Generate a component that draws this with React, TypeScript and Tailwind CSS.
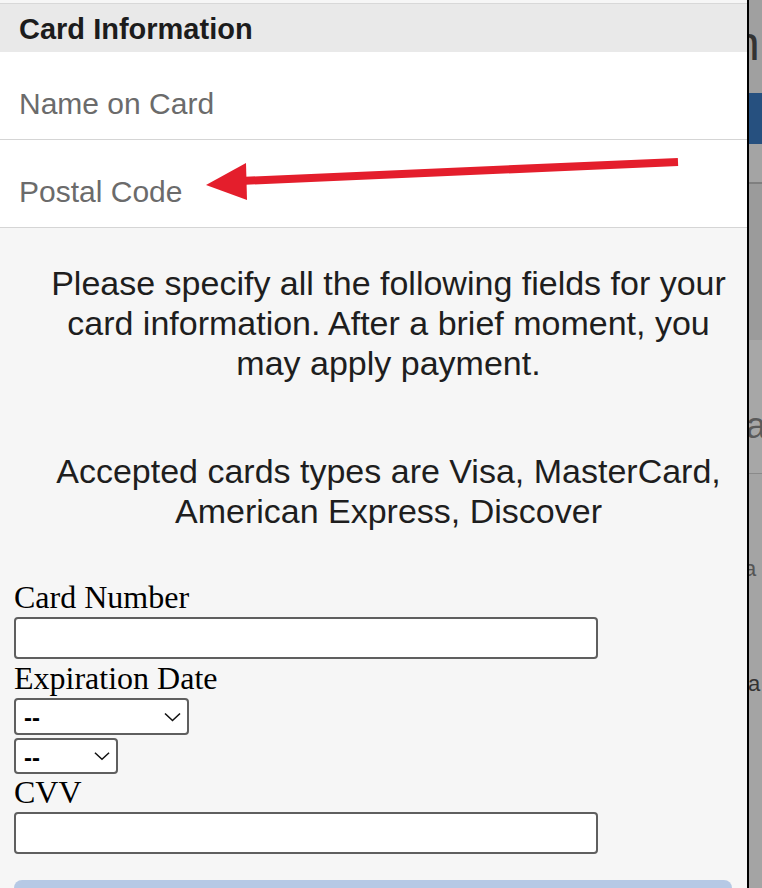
import React from "react";

const sans = { fontFamily: '"Liberation Sans", Arial, sans-serif' };
const serif = { fontFamily: '"Liberation Serif", "Times New Roman", serif' };

const Chevron: React.FC<{ w: number }> = ({ w }) => (
  <svg width={w} height={10} viewBox="0 0 17 10" fill="none" className="pointer-events-none absolute top-1/2 -translate-y-1/2" style={{ right: 8 }}>
    <path d="M1 1.5 L8.5 8.5 L16 1.5" stroke="#111" strokeWidth="1.6" />
  </svg>
);

// red annotation arrow pointing at the Postal Code row
const Arrow: React.FC = () => (
  <svg width={500} height={60} viewBox="0 0 500 60" className="pointer-events-none absolute left-[200px] top-[150px]">
    <path d="M478 12 L40 31" stroke="#e41e2c" strokeWidth="8" strokeLinecap="butt" />
    <path d="M6 35 L46 13 L47 50 Z" fill="#e41e2c" />
  </svg>
);

const App: React.FC = () => {
  return (
    <div className="flex h-[888px] w-[762px] overflow-hidden bg-[#a3a3a3]">
      <div className="relative w-[747px] shrink-0 bg-[#f6f6f6] pt-[3px]">
        <div
          style={sans}
          className="h-[49px] border-t border-[#d8d8d8] bg-[#e9e9e9] px-[19px] pt-[8px] text-[29px] font-bold leading-[34px] text-[#1c1c1c]"
        >
          Card Information
        </div>
        <div
          style={sans}
          className="h-[88px] border-b border-[#d5d5d5] bg-white px-[19px] pt-[35px] text-[30px] leading-[34px] text-[#6b6b6b]"
        >
          Name on Card
        </div>
        <div
          style={sans}
          className="h-[88px] border-b border-[#d5d5d5] bg-white px-[19px] pt-[35px] text-[30px] leading-[34px] text-[#6b6b6b]"
        >
          Postal Code
        </div>
        <Arrow />

        <div style={sans} className="pl-[44px] pr-[14px] pt-[35px] text-center text-[34px] leading-[40px] text-[#1e1e1e]">
          <p>Please specify all the following fields for your card information. After a brief moment, you may apply payment.</p>
          <p className="mt-[68px]">Accepted cards types are Visa, MasterCard, American Express, Discover</p>
        </div>

        <form style={serif} className="mt-[48px] flex flex-col px-[14px] text-[32px] leading-[36px] text-black">
          <label>Card Number</label>
          <input type="text" className="mt-[2px] h-[42px] w-[584px] rounded-[4px] border-2 border-[#5f5f5f] bg-white" />
          <label className="mt-[1px]">Expiration Date</label>
          <div className="relative mt-[2px] w-[175px]">
            <select style={sans} className="block h-[37px] w-full appearance-none rounded-[4px] border-2 border-[#5f5f5f] bg-white pl-[8px] text-[24px] font-bold text-black">
              <option>--</option>
            </select>
            <Chevron w={17} />
          </div>
          <div className="relative mt-[3px] w-[104px]">
            <select style={sans} className="block h-[36px] w-full appearance-none rounded-[4px] border-2 border-[#5f5f5f] bg-white pl-[8px] text-[24px] font-bold text-black">
              <option>--</option>
            </select>
            <Chevron w={16} />
          </div>
          <label>CVV</label>
          <input type="text" className="mt-[2px] h-[42px] w-[584px] rounded-[4px] border-2 border-[#5f5f5f] bg-white" />
          <button type="button" aria-label="Apply Payment" className="mt-[26px] h-[50px] w-[718px] rounded-t-[8px] bg-[#b6c9e5]" />
        </form>
      </div>

      <div style={sans} className="flex flex-1 flex-col overflow-hidden border-l-2 border-black">
        <div className="h-[93px] bg-[#a0a0a0] pt-[20px]">
          <span className="-ml-[16px] block text-[48px] leading-[48px] text-[#333]">n</span>
        </div>
        <div className="h-[51px] bg-[#26507f]" />
        <div className="h-[40px] border-b-2 border-[#7f7f7f] bg-[#a4a4a4]" />
        <div className="h-[156px] bg-[#9b9b9b]" />
        <div className="h-[134px] border-b border-[#8a8a8a] bg-[#a7a7a7] pt-[68px]">
          <span className="-ml-[3px] block text-[36px] font-light leading-[36px] text-[#5a5a5a]">a</span>
        </div>
        <div className="flex-1 bg-[#a4a4a4] pt-[83px]">
          <span className="-ml-[5px] block text-[22px] leading-[24px] text-[#555]">a</span>
          <span className="mt-[91px] -ml-[1px] block text-[22px] leading-[24px] text-[#333]">a</span>
        </div>
      </div>
    </div>
  );
};

export default App;
